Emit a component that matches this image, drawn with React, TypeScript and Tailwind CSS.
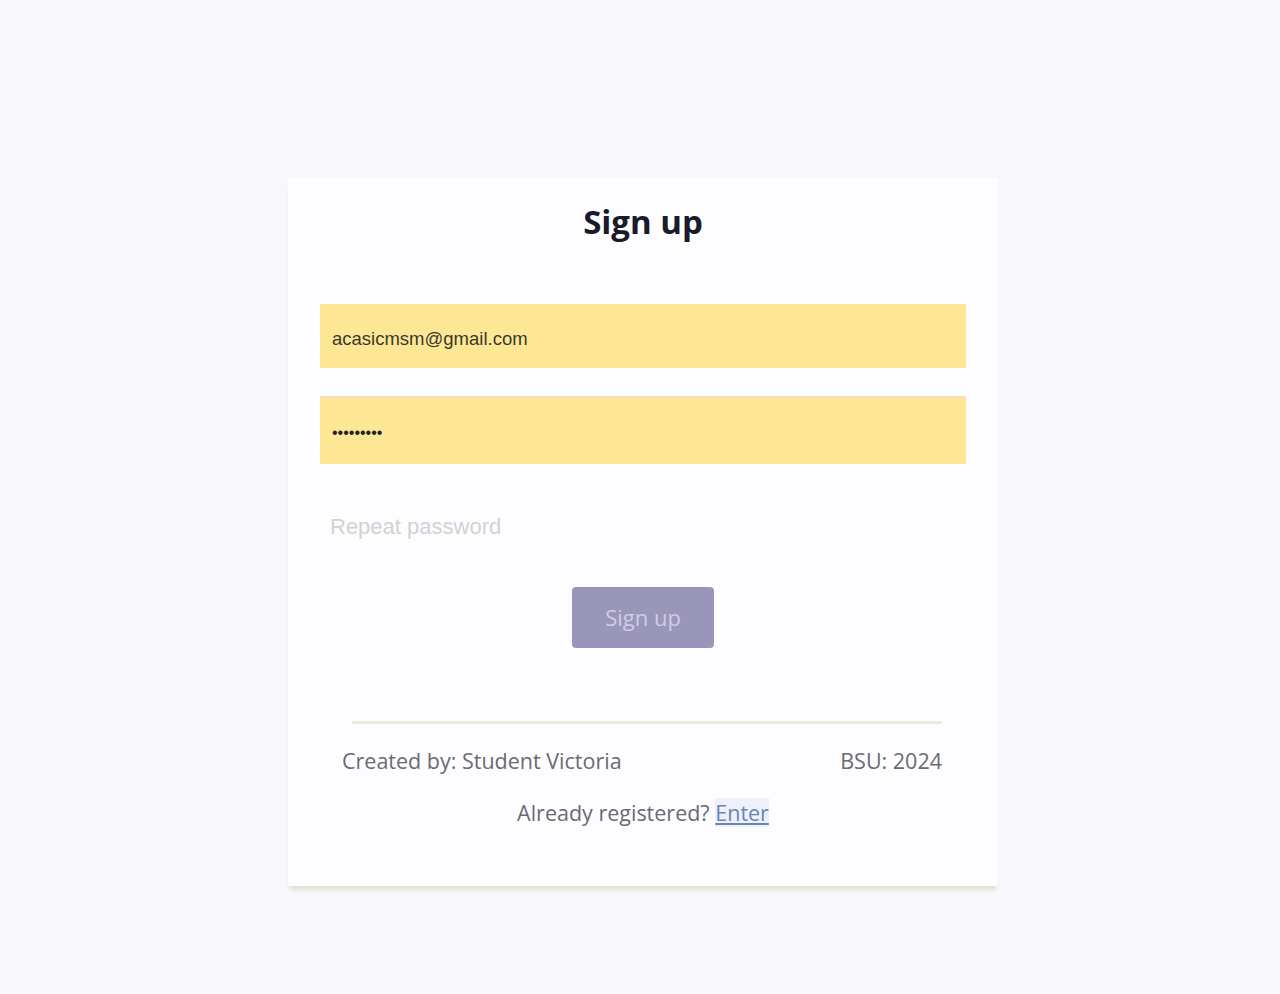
import React from "react";

export default function App() {
  return (
    <div className="min-h-screen w-full bg-[#f8f8fc] pt-[178px]" style={{ fontFamily: '"Open Sans", "Noto Sans", sans-serif' }}>
      <div className="mx-auto flex w-[710px] translate-x-[3px] flex-col bg-[#fdfdff] px-8 pb-[56px] pt-[20px] shadow-[0_6px_4px_-2px_rgba(200,195,150,0.45)]">
        <h1 className="text-center text-[33px] font-bold leading-[48px] text-[#1a1a2a]">Sign up</h1>

        <div className="mt-[58px] flex flex-col">
          <input
            readOnly
            value="acasicmsm@gmail.com"
            className="h-[64px] w-full bg-[#fde795] px-3 pt-[6px] text-[18.5px] text-[#3a3a2a] outline-none"
            style={{ fontFamily: '"Liberation Sans", Arial, sans-serif' }}
          />
          <input
            readOnly
            type="password"
            value="123456789"
            className="mt-[28px] h-[68px] w-full border-t-2 border-[#f9dcc0] bg-[#fde795] px-3 pt-[3px] text-[16px] text-[#222] outline-none"
            style={{ fontFamily: '"Liberation Sans", Arial, sans-serif' }}
          />
          <input
            readOnly
            placeholder="Repeat password"
            className="mt-[31px] h-[64px] w-full bg-transparent px-[10px] text-[22px] text-[#333] outline-none placeholder:text-[#d2d2d2]"
            style={{ fontFamily: '"Liberation Sans", Arial, sans-serif' }}
          />
        </div>

        <div className="mt-[28px] flex justify-center">
          <button className="h-[61px] w-[142px] rounded-[4px] bg-[#9a96ba] text-[22px] text-[#cfcde6]">
            Sign up
          </button>
        </div>

        <div className="ml-[32px] mt-[73px] h-[3px] w-[590px] bg-[#ecebdc]" />

        <div className="mt-[21px] flex items-center justify-between pl-[22px] pr-[24px] text-[21.5px] text-[#6a6a72]">
          <span>Created by: Student Victoria</span>
          <span>BSU: 2024</span>
        </div>

        <div className="mt-[20px] text-center text-[21.5px] text-[#6a6a72]">
          Already registered?{" "}
          <a href="#" className="bg-[#eef0fa] text-[#6a86b8] underline">
            Enter
          </a>
        </div>
      </div>
    </div>
  );
}
